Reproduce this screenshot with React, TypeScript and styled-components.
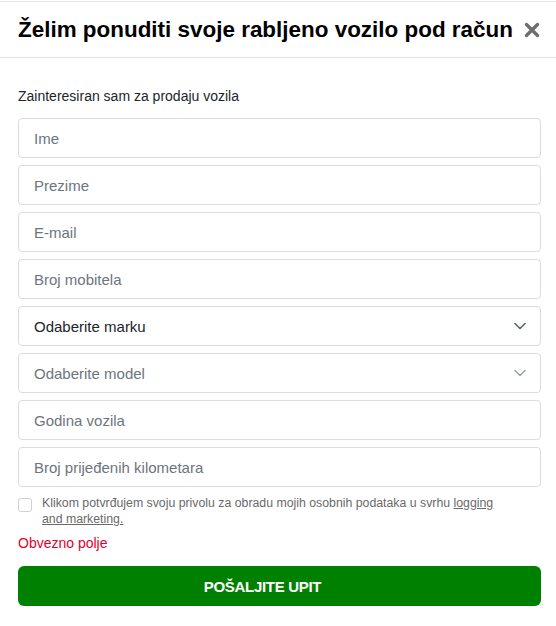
import React from "react";
import styled, { createGlobalStyle } from "styled-components";

const Global = createGlobalStyle`
  html, body { margin: 0; padding: 0; background: #fff; }
  body { font-family: "Liberation Sans", Arial, sans-serif; color: #212529; }
  * { box-sizing: border-box; }
`;

const Modal = styled.div`
  width: 556px;
  border-top: 1px solid #e3e3e3;
  margin-top: 1px;
  background: #fff;
`;

const Header = styled.div`
  display: flex;
  align-items: center;
  justify-content: space-between;
  height: 56px;
  padding: 0 15px 0 18px;
  border-bottom: 1px solid #dee2e6;
`;

const Title = styled.h2`
  margin: 0;
  font-size: 22.45px;
  font-weight: 700;
  color: #000;
`;

const Close = styled.button`
  border: 0;
  background: none;
  padding: 0;
  width: 18px;
  height: 18px;
  display: flex;
  align-items: center;
  justify-content: center;
  cursor: pointer;
`;

const Body = styled.form`
  padding: 30px 15px 0 18px;
  display: flex;
  flex-direction: column;
`;

const Label = styled.div`
  font-size: 14px;
  color: #212529;
  margin-bottom: 14px;
`;

const Fields = styled.div`
  display: flex;
  flex-direction: column;
  gap: 7px;
`;

const Field = styled.div`
  height: 40px;
  border: 1px solid #dcdcdc;
  border-radius: 4px;
  display: flex;
  align-items: center;
  padding: 0 14px 0 15px;
  justify-content: space-between;
`;

const Placeholder = styled.span<{ $dark?: boolean }>`
  font-size: 15px;
  color: ${(p) => (p.$dark ? "#212529" : "#6c757d")};
`;

const Consent = styled.label`
  display: flex;
  gap: 10px;
  margin-top: 8px;
  align-items: flex-start;
`;

const Box = styled.span`
  flex: 0 0 auto;
  width: 14px;
  height: 14px;
  margin-top: 3px;
  border: 1px solid #d0d0d0;
  border-radius: 3px;
  background: #fff;
`;

const ConsentText = styled.span`
  font-size: 12.3px;
  line-height: 16px;
  color: #6a6a6a;
  padding-right: 35px;
`;

const Link = styled.a`
  color: #6a6a6a;
  text-decoration: underline;
`;

const Error = styled.div`
  color: #e4002b;
  font-size: 14px;
  margin-top: 8px;
`;

const Submit = styled.button`
  margin-top: 15px;
  height: 40px;
  border: 0;
  border-radius: 6px;
  background: #008000;
  color: #fff;
  padding: 0 34px 0 0;
  font-family: "Liberation Sans", Arial, sans-serif;
  font-weight: 700;
  font-size: 15px;
  letter-spacing: -0.3px;
`;

const Chevron = ({ color }: { color: string }) => (
  <svg width="12" height="8" viewBox="0 0 12 8" fill="none">
    <path d="M1 1.5l5 5 5-5" stroke={color} strokeWidth="1.6" strokeLinecap="round" strokeLinejoin="round" />
  </svg>
);

const fields: { text: string; dark?: boolean; chev?: string }[] = [
  { text: "Ime" },
  { text: "Prezime" },
  { text: "E-mail" },
  { text: "Broj mobitela" },
  { text: "Odaberite marku", dark: true, chev: "#5a6470" },
  { text: "Odaberite model", chev: "#9aa0a8" },
  { text: "Godina vozila" },
  { text: "Broj prijeđenih kilometara" },
];

export default function App() {
  return (
    <>
      <Global />
      <Modal>
        <Header>
          <Title>Želim ponuditi svoje rabljeno vozilo pod račun</Title>
          <Close aria-label="Zatvori">
            <svg width="16" height="16" viewBox="0 0 16 16">
              <path d="M2.5 2.5l11 11M13.5 2.5l-11 11" stroke="#6e6e6e" strokeWidth="3.4" strokeLinecap="round" />
            </svg>
          </Close>
        </Header>
        <Body>
          <Label>Zainteresiran sam za prodaju vozila</Label>
          <Fields>
            {fields.map((f) => (
              <Field key={f.text}>
                <Placeholder $dark={f.dark}>{f.text}</Placeholder>
                {f.chev && <Chevron color={f.chev} />}
              </Field>
            ))}
          </Fields>
          <Consent>
            <Box />
            <ConsentText>
              Klikom potvrđujem svoju privolu za obradu mojih osobnih podataka u svrhu{" "}
              <Link href="#">logging and marketing.</Link>
            </ConsentText>
          </Consent>
          <Error>Obvezno polje</Error>
          <Submit type="button">POŠALJITE UPIT</Submit>
        </Body>
      </Modal>
    </>
  );
}
